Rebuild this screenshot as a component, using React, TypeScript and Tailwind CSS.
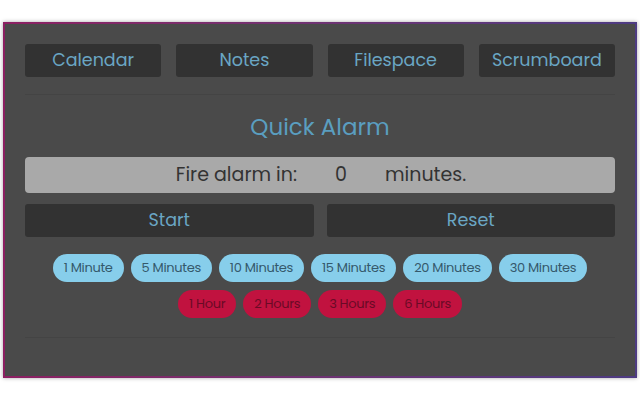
const navItems = ["Calendar", "Notes", "Filespace", "Scrumboard"];
const minuteChips = ["1 Minute", "5 Minutes", "10 Minutes", "15 Minutes", "20 Minutes", "30 Minutes"];
const hourChips = ["1 Hour", "2 Hours", "3 Hours", "6 Hours"];

export default function App() {
  return (
    <div className="w-[640px] h-[400px] bg-white pt-[22px] pl-[3px] font-['Poppins','Inter','Liberation_Sans',sans-serif]">
      <div className="w-[634px] h-[356px] p-[2px] bg-gradient-to-r from-[#8c1f62] to-[#4d3b82] shadow-[0_0_4px_rgba(0,0,0,0.35)]">
        <div className="h-full bg-[#4a4a4a] px-5 pt-5">
          {/* Top navigation */}
          <div className="flex gap-[15px]">
            {navItems.map((item) => (
              <button
                key={item}
                className="flex-1 h-[33px] rounded-[3px] bg-[#323232] text-[#6aa6c4] text-[17.5px]"
              >
                {item}
              </button>
            ))}
          </div>
          <div className="mt-[17px] h-px bg-[#444444]" />

          <h1 className="mt-[17px] text-center text-[23px] leading-[30px] text-[#5a9ec0]">
            Quick Alarm
          </h1>

          {/* Alarm input */}
          <div className="mt-[15px] h-[36px] rounded-[4px] bg-[#a9a9a9] flex items-center text-[19px] text-[#333333]">
            <span className="w-[272px] text-right">Fire alarm in:</span>
            <span className="w-[88px] text-center">0</span>
            <span>minutes.</span>
          </div>

          <div className="mt-[11px] flex gap-[13px]">
            <button className="flex-1 h-[33px] rounded-[3px] bg-[#323232] text-[#6aa6c4] text-[17.5px]">
              Start
            </button>
            <button className="flex-1 h-[33px] rounded-[3px] bg-[#323232] text-[#6aa6c4] text-[17.5px]">
              Reset
            </button>
          </div>

          {/* Presets */}
          <div className="mt-[17px] flex justify-center gap-[7px]">
            {minuteChips.map((c) => (
              <button
                key={c}
                className="h-[28px] px-[11px] rounded-full bg-[#87ceeb] text-[#35596b] text-[13px] tracking-tight"
              >
                {c}
              </button>
            ))}
          </div>
          <div className="mt-[8px] flex justify-center gap-[7px]">
            {hourChips.map((c) => (
              <button
                key={c}
                className="h-[28px] px-[11px] rounded-full bg-[#c1123f] text-[#6b0a26] text-[13px] tracking-tight"
              >
                {c}
              </button>
            ))}
          </div>
          <div className="mt-[19px] h-px bg-[#444444]" />
        </div>
      </div>
    </div>
  );
}
